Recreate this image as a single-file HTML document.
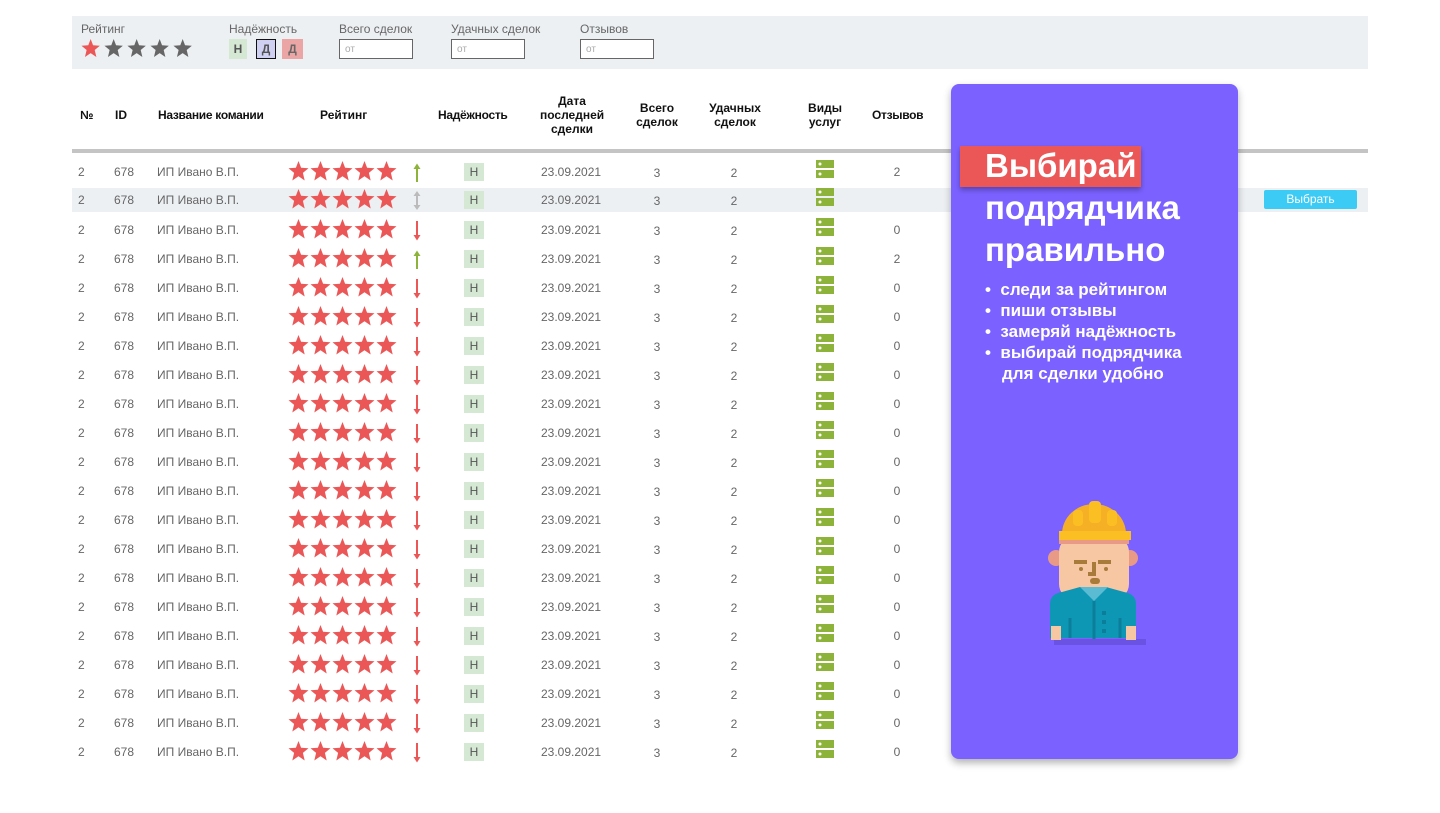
<!DOCTYPE html>
<html><head><meta charset="utf-8"><style>
*{margin:0;padding:0;box-sizing:border-box}
body{width:1440px;height:813px;background:#fff;font-family:"Liberation Sans","DejaVu Sans",sans-serif;position:relative;overflow:hidden;color:#555}
.a{position:absolute}
.flt{left:72px;top:16px;width:1296px;height:53px;background:#edf0f3}
.fl{font-size:12px;color:#666;top:22px}
.inp{top:39px;width:74px;height:20px;border:1px solid #666;background:#fff;font-size:10px;color:#aaa;padding:4px 0 0 5px}
.hd{font-size:12px;font-weight:bold;color:#111;text-align:center;line-height:14px}
.r{position:absolute;left:72px;width:1296px;height:24px;font-size:12px;color:#666}
.r span{position:absolute;top:5px}
.r .c{text-align:center;width:40px}
.b{position:absolute;left:392px;top:3px;width:20px;height:18px;background:#d5e8d4;font-size:12px;color:#555;text-align:center;line-height:18px}
.st{position:absolute;left:216px;top:1px}
.ar{position:absolute;left:340px;top:2px}
.sv{position:absolute;left:744px;top:0px}
</style></head><body>
<svg width="0" height="0" style="position:absolute"><defs>
<polygon id="s" points="10.5,0 13.1,6.8 20.5,7.3 14.9,11.9 16.7,19.5 10.5,15.3 4.3,19.5 6.1,11.9 0.5,7.3 7.9,6.8"/>
<g id="stars" fill="#eb5757"><use href="#s" x="0"/><use href="#s" x="22"/><use href="#s" x="44"/><use href="#s" x="66"/><use href="#s" x="88"/></g>
<g id="up"><path d="M5 3v17" stroke="#8db33a" stroke-width="2"/><path d="M1.5 7L5 1.5 8.5 7z" fill="#8db33a"/></g>
<g id="dn"><path d="M5 1v17" stroke="#eb5757" stroke-width="2"/><path d="M1.5 15L5 20.5 8.5 15z" fill="#eb5757"/></g>
<g id="ud"><path d="M5 3v15" stroke="#bbb" stroke-width="2"/><path d="M1.5 6L5 1 8.5 6zM1.5 15L5 20 8.5 15z" fill="#bbb"/></g>
<g id="srv" fill="#8db33a"><rect x="0" y="0" width="18" height="8"/><rect x="0" y="10" width="18" height="8"/><circle cx="4" cy="4" r="1.5" fill="#fff"/><circle cx="4" cy="14" r="1.5" fill="#fff"/></g>
</defs></svg>

<div class="a flt"></div>
<div class="a fl" style="left:81px">Рейтинг</div>
<svg class="a" style="left:81px;top:39px" width="112" height="20"><g transform="scale(0.92)"><use href="#s" x="0" fill="#eb5757"/><use href="#s" x="25" fill="#666"/><use href="#s" x="50" fill="#666"/><use href="#s" x="75" fill="#666"/><use href="#s" x="100" fill="#666"/></g></svg>
<div class="a fl" style="left:229px">Надёжность</div>
<div class="a" style="left:229px;top:39px;width:18px;height:20px;background:#d5e8d4;font-size:12px;font-weight:bold;color:#555;text-align:center;line-height:20px">Н</div>
<div class="a" style="left:256px;top:39px;width:20px;height:20px;background:#d0d0f3;border:1px solid #111;font-size:12px;font-weight:bold;color:#555;text-align:center;line-height:18px">Д</div>
<div class="a" style="left:282px;top:39px;width:21px;height:20px;background:#eba5a5;font-size:12px;font-weight:bold;color:#666;text-align:center;line-height:20px">Д</div>
<div class="a fl" style="left:339px">Всего сделок</div><div class="a inp" style="left:339px">от</div>
<div class="a fl" style="left:451px">Удачных сделок</div><div class="a inp" style="left:451px">от</div>
<div class="a fl" style="left:580px">Отзывов</div><div class="a inp" style="left:580px">от</div>

<div class="a hd" style="left:80px;top:108px">№</div>
<div class="a hd" style="left:115px;top:108px">ID</div>
<div class="a hd" style="left:158px;top:108px;letter-spacing:-0.3px">Название комании</div>
<div class="a hd" style="left:320px;top:108px">Рейтинг</div>
<div class="a hd" style="left:438px;top:108px;letter-spacing:-0.3px">Надёжность</div>
<div class="a hd" style="left:540px;top:94px;width:64px">Дата последней сделки</div>
<div class="a hd" style="left:630px;top:101px;width:54px">Всего сделок</div>
<div class="a hd" style="left:704px;top:101px;width:62px">Удачных сделок</div>
<div class="a hd" style="left:800px;top:101px;width:50px">Виды услуг</div>
<div class="a hd" style="left:872px;top:108px;letter-spacing:-0.3px">Отзывов</div>
<div class="a" style="left:72px;top:149px;width:1296px;height:4px;background:#c4c4c4"></div>

<div class="r" style="top:160px"><span style="left:6px">2</span><span style="left:42px">678</span><span style="left:85px">ИП Ивано В.П.</span><svg class="st" width="112" height="22"><use href="#stars"/></svg><svg class="ar" width="10" height="22"><use href="#up"/></svg><div class="b">Н</div><span style="left:469px">23.09.2021</span><span class="c" style="left:565px;top:6px">3</span><span class="c" style="left:642px;top:6px">2</span><svg class="sv" width="18" height="18"><use href="#srv"/></svg><span class="c" style="left:805px">2</span></div>
<div class="r" style="top:188px;background:#edf0f3"><span style="left:6px">2</span><span style="left:42px">678</span><span style="left:85px">ИП Ивано В.П.</span><svg class="st" width="112" height="22"><use href="#stars"/></svg><svg class="ar" width="10" height="22"><use href="#ud"/></svg><div class="b">Н</div><span style="left:469px">23.09.2021</span><span class="c" style="left:565px;top:6px">3</span><span class="c" style="left:642px;top:6px">2</span><svg class="sv" width="18" height="18"><use href="#srv"/></svg><div class="a" style="left:1192px;top:2px;width:93px;height:19px;background:#3ccbf4;border-radius:2px;color:#fff;font-size:12px;text-align:center;line-height:19px">Выбрать</div></div>
<div class="r" style="top:218px"><span style="left:6px">2</span><span style="left:42px">678</span><span style="left:85px">ИП Ивано В.П.</span><svg class="st" width="112" height="22"><use href="#stars"/></svg><svg class="ar" width="10" height="22"><use href="#dn"/></svg><div class="b">Н</div><span style="left:469px">23.09.2021</span><span class="c" style="left:565px;top:6px">3</span><span class="c" style="left:642px;top:6px">2</span><svg class="sv" width="18" height="18"><use href="#srv"/></svg><span class="c" style="left:805px">0</span></div>
<div class="r" style="top:247px"><span style="left:6px">2</span><span style="left:42px">678</span><span style="left:85px">ИП Ивано В.П.</span><svg class="st" width="112" height="22"><use href="#stars"/></svg><svg class="ar" width="10" height="22"><use href="#up"/></svg><div class="b">Н</div><span style="left:469px">23.09.2021</span><span class="c" style="left:565px;top:6px">3</span><span class="c" style="left:642px;top:6px">2</span><svg class="sv" width="18" height="18"><use href="#srv"/></svg><span class="c" style="left:805px">2</span></div>
<div class="r" style="top:276px"><span style="left:6px">2</span><span style="left:42px">678</span><span style="left:85px">ИП Ивано В.П.</span><svg class="st" width="112" height="22"><use href="#stars"/></svg><svg class="ar" width="10" height="22"><use href="#dn"/></svg><div class="b">Н</div><span style="left:469px">23.09.2021</span><span class="c" style="left:565px;top:6px">3</span><span class="c" style="left:642px;top:6px">2</span><svg class="sv" width="18" height="18"><use href="#srv"/></svg><span class="c" style="left:805px">0</span></div>
<div class="r" style="top:305px"><span style="left:6px">2</span><span style="left:42px">678</span><span style="left:85px">ИП Ивано В.П.</span><svg class="st" width="112" height="22"><use href="#stars"/></svg><svg class="ar" width="10" height="22"><use href="#dn"/></svg><div class="b">Н</div><span style="left:469px">23.09.2021</span><span class="c" style="left:565px;top:6px">3</span><span class="c" style="left:642px;top:6px">2</span><svg class="sv" width="18" height="18"><use href="#srv"/></svg><span class="c" style="left:805px">0</span></div>
<div class="r" style="top:334px"><span style="left:6px">2</span><span style="left:42px">678</span><span style="left:85px">ИП Ивано В.П.</span><svg class="st" width="112" height="22"><use href="#stars"/></svg><svg class="ar" width="10" height="22"><use href="#dn"/></svg><div class="b">Н</div><span style="left:469px">23.09.2021</span><span class="c" style="left:565px;top:6px">3</span><span class="c" style="left:642px;top:6px">2</span><svg class="sv" width="18" height="18"><use href="#srv"/></svg><span class="c" style="left:805px">0</span></div>
<div class="r" style="top:363px"><span style="left:6px">2</span><span style="left:42px">678</span><span style="left:85px">ИП Ивано В.П.</span><svg class="st" width="112" height="22"><use href="#stars"/></svg><svg class="ar" width="10" height="22"><use href="#dn"/></svg><div class="b">Н</div><span style="left:469px">23.09.2021</span><span class="c" style="left:565px;top:6px">3</span><span class="c" style="left:642px;top:6px">2</span><svg class="sv" width="18" height="18"><use href="#srv"/></svg><span class="c" style="left:805px">0</span></div>
<div class="r" style="top:392px"><span style="left:6px">2</span><span style="left:42px">678</span><span style="left:85px">ИП Ивано В.П.</span><svg class="st" width="112" height="22"><use href="#stars"/></svg><svg class="ar" width="10" height="22"><use href="#dn"/></svg><div class="b">Н</div><span style="left:469px">23.09.2021</span><span class="c" style="left:565px;top:6px">3</span><span class="c" style="left:642px;top:6px">2</span><svg class="sv" width="18" height="18"><use href="#srv"/></svg><span class="c" style="left:805px">0</span></div>
<div class="r" style="top:421px"><span style="left:6px">2</span><span style="left:42px">678</span><span style="left:85px">ИП Ивано В.П.</span><svg class="st" width="112" height="22"><use href="#stars"/></svg><svg class="ar" width="10" height="22"><use href="#dn"/></svg><div class="b">Н</div><span style="left:469px">23.09.2021</span><span class="c" style="left:565px;top:6px">3</span><span class="c" style="left:642px;top:6px">2</span><svg class="sv" width="18" height="18"><use href="#srv"/></svg><span class="c" style="left:805px">0</span></div>
<div class="r" style="top:450px"><span style="left:6px">2</span><span style="left:42px">678</span><span style="left:85px">ИП Ивано В.П.</span><svg class="st" width="112" height="22"><use href="#stars"/></svg><svg class="ar" width="10" height="22"><use href="#dn"/></svg><div class="b">Н</div><span style="left:469px">23.09.2021</span><span class="c" style="left:565px;top:6px">3</span><span class="c" style="left:642px;top:6px">2</span><svg class="sv" width="18" height="18"><use href="#srv"/></svg><span class="c" style="left:805px">0</span></div>
<div class="r" style="top:479px"><span style="left:6px">2</span><span style="left:42px">678</span><span style="left:85px">ИП Ивано В.П.</span><svg class="st" width="112" height="22"><use href="#stars"/></svg><svg class="ar" width="10" height="22"><use href="#dn"/></svg><div class="b">Н</div><span style="left:469px">23.09.2021</span><span class="c" style="left:565px;top:6px">3</span><span class="c" style="left:642px;top:6px">2</span><svg class="sv" width="18" height="18"><use href="#srv"/></svg><span class="c" style="left:805px">0</span></div>
<div class="r" style="top:508px"><span style="left:6px">2</span><span style="left:42px">678</span><span style="left:85px">ИП Ивано В.П.</span><svg class="st" width="112" height="22"><use href="#stars"/></svg><svg class="ar" width="10" height="22"><use href="#dn"/></svg><div class="b">Н</div><span style="left:469px">23.09.2021</span><span class="c" style="left:565px;top:6px">3</span><span class="c" style="left:642px;top:6px">2</span><svg class="sv" width="18" height="18"><use href="#srv"/></svg><span class="c" style="left:805px">0</span></div>
<div class="r" style="top:537px"><span style="left:6px">2</span><span style="left:42px">678</span><span style="left:85px">ИП Ивано В.П.</span><svg class="st" width="112" height="22"><use href="#stars"/></svg><svg class="ar" width="10" height="22"><use href="#dn"/></svg><div class="b">Н</div><span style="left:469px">23.09.2021</span><span class="c" style="left:565px;top:6px">3</span><span class="c" style="left:642px;top:6px">2</span><svg class="sv" width="18" height="18"><use href="#srv"/></svg><span class="c" style="left:805px">0</span></div>
<div class="r" style="top:566px"><span style="left:6px">2</span><span style="left:42px">678</span><span style="left:85px">ИП Ивано В.П.</span><svg class="st" width="112" height="22"><use href="#stars"/></svg><svg class="ar" width="10" height="22"><use href="#dn"/></svg><div class="b">Н</div><span style="left:469px">23.09.2021</span><span class="c" style="left:565px;top:6px">3</span><span class="c" style="left:642px;top:6px">2</span><svg class="sv" width="18" height="18"><use href="#srv"/></svg><span class="c" style="left:805px">0</span></div>
<div class="r" style="top:595px"><span style="left:6px">2</span><span style="left:42px">678</span><span style="left:85px">ИП Ивано В.П.</span><svg class="st" width="112" height="22"><use href="#stars"/></svg><svg class="ar" width="10" height="22"><use href="#dn"/></svg><div class="b">Н</div><span style="left:469px">23.09.2021</span><span class="c" style="left:565px;top:6px">3</span><span class="c" style="left:642px;top:6px">2</span><svg class="sv" width="18" height="18"><use href="#srv"/></svg><span class="c" style="left:805px">0</span></div>
<div class="r" style="top:624px"><span style="left:6px">2</span><span style="left:42px">678</span><span style="left:85px">ИП Ивано В.П.</span><svg class="st" width="112" height="22"><use href="#stars"/></svg><svg class="ar" width="10" height="22"><use href="#dn"/></svg><div class="b">Н</div><span style="left:469px">23.09.2021</span><span class="c" style="left:565px;top:6px">3</span><span class="c" style="left:642px;top:6px">2</span><svg class="sv" width="18" height="18"><use href="#srv"/></svg><span class="c" style="left:805px">0</span></div>
<div class="r" style="top:653px"><span style="left:6px">2</span><span style="left:42px">678</span><span style="left:85px">ИП Ивано В.П.</span><svg class="st" width="112" height="22"><use href="#stars"/></svg><svg class="ar" width="10" height="22"><use href="#dn"/></svg><div class="b">Н</div><span style="left:469px">23.09.2021</span><span class="c" style="left:565px;top:6px">3</span><span class="c" style="left:642px;top:6px">2</span><svg class="sv" width="18" height="18"><use href="#srv"/></svg><span class="c" style="left:805px">0</span></div>
<div class="r" style="top:682px"><span style="left:6px">2</span><span style="left:42px">678</span><span style="left:85px">ИП Ивано В.П.</span><svg class="st" width="112" height="22"><use href="#stars"/></svg><svg class="ar" width="10" height="22"><use href="#dn"/></svg><div class="b">Н</div><span style="left:469px">23.09.2021</span><span class="c" style="left:565px;top:6px">3</span><span class="c" style="left:642px;top:6px">2</span><svg class="sv" width="18" height="18"><use href="#srv"/></svg><span class="c" style="left:805px">0</span></div>
<div class="r" style="top:711px"><span style="left:6px">2</span><span style="left:42px">678</span><span style="left:85px">ИП Ивано В.П.</span><svg class="st" width="112" height="22"><use href="#stars"/></svg><svg class="ar" width="10" height="22"><use href="#dn"/></svg><div class="b">Н</div><span style="left:469px">23.09.2021</span><span class="c" style="left:565px;top:6px">3</span><span class="c" style="left:642px;top:6px">2</span><svg class="sv" width="18" height="18"><use href="#srv"/></svg><span class="c" style="left:805px">0</span></div>
<div class="r" style="top:740px"><span style="left:6px">2</span><span style="left:42px">678</span><span style="left:85px">ИП Ивано В.П.</span><svg class="st" width="112" height="22"><use href="#stars"/></svg><svg class="ar" width="10" height="22"><use href="#dn"/></svg><div class="b">Н</div><span style="left:469px">23.09.2021</span><span class="c" style="left:565px;top:6px">3</span><span class="c" style="left:642px;top:6px">2</span><svg class="sv" width="18" height="18"><use href="#srv"/></svg><span class="c" style="left:805px">0</span></div>

<div class="a" style="left:951px;top:84px;width:287px;height:675px;background:#7b61ff;border-radius:8px;box-shadow:0 4px 8px rgba(0,0,0,.3)"></div>
<div class="a" style="left:960px;top:146px;width:181px;height:41px;background:#eb5757;box-shadow:0 3px 5px rgba(0,0,0,.3)"></div>
<div class="a" style="left:985px;top:145px;color:#fff;font-weight:bold;font-size:33px;line-height:42px">Выбирай<br>подрядчика<br>правильно</div>
<div class="a" style="left:985px;top:279px;color:#fff;font-weight:bold;font-size:17px;line-height:21px">
<div>•&nbsp;&nbsp;следи за рейтингом</div><div>•&nbsp;&nbsp;пиши отзывы</div><div>•&nbsp;&nbsp;замеряй надёжность</div><div>•&nbsp;&nbsp;выбирай подрядчика</div><div style="padding-left:17px">для сделки удобно</div></div>

<svg class="a" style="left:1040px;top:498px" width="110" height="150" viewBox="0 0 110 150">
<rect x="14" y="141" width="92" height="6" fill="#5a46c8" opacity=".5"/>
<circle cx="16" cy="60" r="8" fill="#e89a86"/><circle cx="90" cy="60" r="8" fill="#e89a86"/>
<rect x="19" y="38" width="70" height="64" rx="16" fill="#f7c6a2"/>
<rect x="19" y="40" width="70" height="6" fill="#e89a86"/>
<path d="M22 36a32 30 0 0 1 64 0z" fill="#f5b026"/>
<rect x="19" y="33" width="72" height="9" fill="#fbbf23"/>
<rect x="49" y="3" width="12" height="22" rx="4" fill="#fbbf23"/>
<rect x="33" y="12" width="10" height="16" rx="4" fill="#fbbf23"/><rect x="67" y="12" width="10" height="16" rx="4" fill="#fbbf23"/>
<path d="M34 64h13M58 64h13M54 64v12h-6" stroke="#a97b3a" stroke-width="4" fill="none"/>
<circle cx="41" cy="71" r="2" fill="#a97b3a"/><circle cx="66" cy="71" r="2" fill="#a97b3a"/>
<rect x="50" y="80" width="10" height="6" rx="3" fill="#a97b3a"/>
<path d="M10 140V106q0-10 12-12l18-5h26l18 5q12 2 12 12v34z" fill="#0e96b5"/>
<path d="M40 89h28l-14 14z" fill="#5bbbd2"/>
<path d="M54 103v38M30 120v20M80 120v20" stroke="#0b7f9a" stroke-width="3"/>
<rect x="11" y="128" width="10" height="14" fill="#f7c6a2"/><rect x="86" y="128" width="10" height="14" fill="#f7c6a2"/>
<rect x="62" y="113" width="4" height="4" fill="#0b7f9a"/><rect x="62" y="122" width="4" height="4" fill="#0b7f9a"/><rect x="62" y="131" width="4" height="4" fill="#0b7f9a"/>
</svg>
</body></html>
